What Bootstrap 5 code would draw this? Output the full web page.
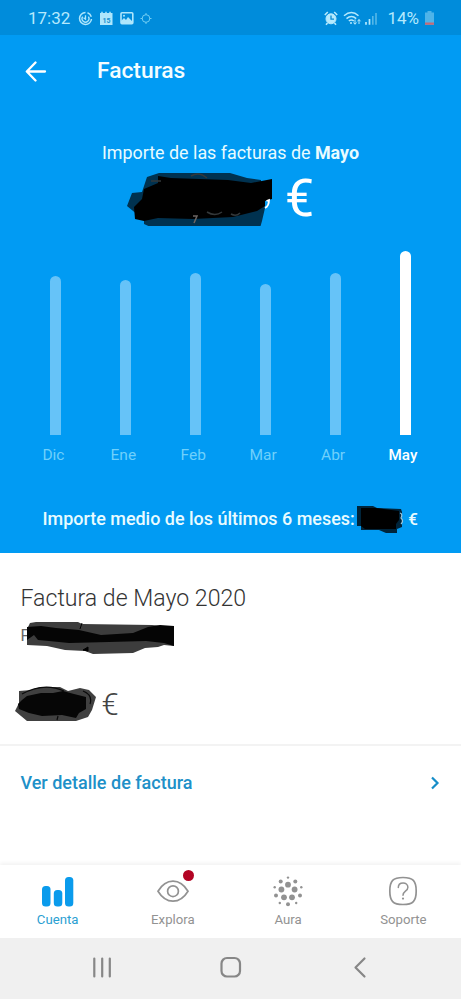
<!DOCTYPE html>
<html lang="es">
<head>
<meta charset="utf-8">
<meta name="viewport" content="width=device-width, initial-scale=1">
<title>Facturas</title>
<link href="https://cdn.jsdelivr.net/npm/bootstrap@5.3.0/dist/css/bootstrap.min.css" rel="stylesheet">
<style>
body{font-family:Roboto,"Liberation Sans",sans-serif;color:#444;background:#fff;height:999px;overflow:hidden}
svg{display:block;flex:none}
.status{height:35px;background:#008cdb;color:#b5e9fd;font-size:17px;line-height:35px;padding:1px 27px 0 28px}
.clock-icons{margin-left:8px}
.battery-text{margin-left:10px}
.battery-icon{margin-left:6px}
.hero{height:518px;background:#019bf3;color:#e9fbff}
.topbar{height:72px;padding-left:25px}
.topbar h1{font-size:22.8px;font-weight:500;margin:0 0 0 50px;color:#f4fdff}
.caption-line{height:24px;line-height:24px;margin-top:34px;font-size:17.9px}
.total{height:54px;margin-top:7px;padding-left:127px}
.total .euro{font-size:52px;line-height:54px;margin-left:12px;color:#fff}
.chart{height:185px;margin-top:24px;padding:0 20.5px 0 20.5px}
.bar-item{width:10.5px;border-radius:5.5px 5.5px 0 0;background:#66c3f8}
.bar-item.current{background:#fff}
.months{padding:0 23px 0 18.5px;margin-top:10px;font-size:15.5px;line-height:21px;color:#6fd0fb}
.months .current{color:#fff;font-weight:500;font-size:15.2px}
.average{margin-top:38px;padding-left:42.5px;height:30px;font-size:17.95px;line-height:30px;font-weight:500}
.average svg{margin-left:2.5px}
.average .unit{margin-left:4px;font-size:17px}
.bill{height:193px;padding:30px 20px 0 20.5px;border-bottom:2px solid #f3f3f3}
.bill h2{font-size:23.1px;line-height:32px;font-weight:300;margin:0;color:#333}
.ident{height:32px;margin-top:7px;font-size:16px;line-height:28px;font-weight:400;color:#666}
.ident svg{margin-left:-2px}
.amount{height:38px;margin:31px 0 0 -7px}
.amount span{font-size:31px;line-height:39px;font-weight:300;margin-left:4px}
.detail{height:73px;padding:0 20px 0 20.5px;color:#2090c8;font-size:18px;font-weight:500}
.tabs{height:73px;margin-top:46px;box-shadow:0 -2px 4px rgba(0,0,0,.055);font-size:13.2px;color:#929292}
.tabs .tab-item{padding-top:11px}
.tabs .label{line-height:18px;margin-top:3px}
.tabs .active{color:#2aa0d2}
.dot{position:absolute;width:11px;height:11px;border-radius:50%;background:#b30424;left:68px;top:5px}
.sysnav{height:61px;background:#f0f0f0}
</style>
<script src="https://cdn.jsdelivr.net/npm/bootstrap@5.3.0/dist/js/bootstrap.bundle.min.js"></script>
</head>
<body>
<div class="status d-flex align-items-center">
  <span>17:32</span>
  <svg class="clock-icons" width="76" height="15" viewBox="0 0 76 15" fill="none" stroke="#aee6fc">
    <path d="M7.500 1.500A6 6 0 1 0 13.500 8M9.500 1.700a6 6 0 0 1 3.800 4" stroke-width="1.500"/><path d="M4.600 5.600a3.500 3.500 0 1 0 5.800 0M7.500 4.200v4L5.600 6.800" stroke-width="1.300"/>
    <path d="M22 2h12.500v12H22z" fill="#aee6fc" stroke="none"/><path d="M24 .8v3m4-3v3m4-3v3" stroke-width="1.500"/>
    <text x="24.500" y="11.500" font-family="Roboto" font-size="7" font-weight="700" fill="#168fce" stroke="none">15</text>
    <rect x="43" y="1.800" width="11.800" height="11" rx="1" stroke-width="1.600"/><path d="M43 12V10l3-3 2 2 2-3 5 5v2z" fill="#aee6fc" stroke="none"/><circle cx="46" cy="4.700" r="1" fill="#aee6fc" stroke="none"/>
    <circle cx="68" cy="7.500" r="3.800" stroke="#71cdf2"/><path d="M68 2v2m0 7v2M62.500 7.500h2m7 0h2" stroke="#71cdf2"/>
  </svg>
  <svg class="ms-auto" width="54" height="15" viewBox="0 0 54 15" fill="none" stroke="#b5e9fd">
    <circle cx="8" cy="7.800" r="5" fill="#b5e9fd"/><path d="M8 4.500v3.700h3" stroke="#078cd4" stroke-width="1.300"/><path d="M1.800 4 4.800 1M14.200 4l-3-3M4.500 12 3 13.800M11.500 12l1.500 1.800" stroke-width="1.600"/>
    <path d="M21 4.800q7.500-6.500 14.500 0M23.500 7.600q5-4.200 9.700 0M25.800 10q2.700-2 5 0" stroke-width="1.500"/><circle cx="28" cy="12" r="1" fill="#b5e9fd" stroke="none"/>
    <path d="M32 8.500v4.500m-1.500-1.500 1.500 1.800 1.500-1.800M36 13V8.500m-1.500 1.800 1.500-1.800 1.500 1.800" stroke-width="1"/>
    <path d="M43 11v2.700M46.500 8v5.700" stroke-width="1.700"/><path d="M49.800 5v8.700M53 2v11.700" stroke="#55b8e8" stroke-width="1.600"/>
  </svg>
  <span class="battery-text">14%</span>
  <svg class="battery-icon" width="9" height="14" viewBox="0 0 9 14"><path d="M2.500 0h4v1.500H9V14H0V1.500h2.500z" fill="#4fb4e9"/><path d="M0 11.500h9v2.300H0z" fill="#c36a78"/></svg>
</div>

<main class="hero">
  <header class="topbar d-flex align-items-center">
    <svg width="22" height="22" viewBox="0 0 22 22" fill="none" stroke="#fff" stroke-width="2.300" stroke-linecap="round" stroke-linejoin="round"><path d="M20 11.500H2M10.500 2.500 1.800 11.500l8.700 9"/></svg>
    <h1>Facturas</h1>
  </header>
  <div class="caption-line text-center">Importe de las facturas de <strong>Mayo</strong></div>
  <div class="total d-flex">
    <svg width="146" height="54" viewBox="0 0 146 54">
      <path d="M0 34 5 21l10-1 5-15 12-4h71l17 5 14 2v14l4 14-3 13-2 7h-10l-25-2-29 3H28l-11-5v-4z" fill="#003250"/>
      <path d="M17 17 31 11V4l13 2 57 2 23 3 21-4v20l-7 2v5l-8 5-24 6-40 2-35-1-14 3-9-2-1-12 8-8z" fill="#000"/>
      <path d="M64 4q8-5 16 2M80 40q8 5 15 0M104 42q5 3 9-1M24 9h10" fill="none" stroke="#33383a" stroke-width="1.500"/>
      <path d="M66 44h4l-3 7" fill="none" stroke="#6c6663" stroke-width="1.500"/>
      <path d="M139.500 29l2.500-1q0 6-4 8" fill="none" stroke="#fff" stroke-width="1.800"/>
    </svg>
    <span class="euro">€</span>
  </div>
  <div class="chart row g-0 row-cols-6 align-items-end">
    <div class="col d-flex justify-content-center"><div class="bar-item" style="height:159px"></div></div>
    <div class="col d-flex justify-content-center"><div class="bar-item" style="height:155px"></div></div>
    <div class="col d-flex justify-content-center"><div class="bar-item" style="height:162px"></div></div>
    <div class="col d-flex justify-content-center"><div class="bar-item" style="height:151px"></div></div>
    <div class="col d-flex justify-content-center"><div class="bar-item" style="height:162px"></div></div>
    <div class="col d-flex justify-content-center"><div class="bar-item current" style="height:184.500px"></div></div>
  </div>
  <div class="months row g-0 row-cols-6 text-center">
    <div class="col">Dic</div><div class="col">Ene</div><div class="col">Feb</div><div class="col">Mar</div><div class="col">Abr</div><div class="col current">May</div>
  </div>
  <div class="average d-flex text-nowrap">
    <span>Importe medio de los últimos 6 meses:</span>
    <svg width="47" height="30" viewBox="0 0 47 30"><path d="M0 2h16l4 2 24 1 1 3v15l-5 2v4H29l-7-3H4v-4H0z" fill="#00243a"/><path d="M4 4h15l23 3v9l-3 4v5H8l-4-3z"/><path d="M43 9q3 1 1 5 3 3 0 6" fill="none" stroke="#9dc9dd" stroke-width="1.200"/></svg>
    <span class="unit">€</span>
  </div>
</main>

<section class="bill">
  <h2>Factura de Mayo 2020</h2>
  <div class="ident d-flex">
    <span>F</span>
    <svg width="147" height="32" viewBox="0 0 147 32">
      <path d="M0 7 3 1 9 0h42l4 2 70 1 22 2v19l-10-1-6 2-13 1-12 5-40 1-8-3-20-1-18-4-21-1z" fill="#3d3d3d"/>
      <path d="M0 5 14 4l15 2 23 2 22 5 32-2 15-6 12-2 14 1v20l-10-3-18-2-37 1-40 1-20-2-11-1-4-5-7 5z" fill="#050505"/><path d="M55 1l-2 6M61 25l-5 3 5 1z" stroke="#000" stroke-width="1"/>
    </svg>
  </div>
  <div class="amount d-flex">
    <svg width="84" height="38" viewBox="0 0 84 38">
      <path d="M5 6l12-1 9-3h20l8 4 12-3 9 2 7 7-4 13-4 7-12 4H13L1 26l4-8z" fill="#404040"/>
      <path d="M13 11 27 8h12l10-2 11 3 12 3v12l-7 4-3 5-14-3-20 1-13-3-10-4-1-5 4-4z" fill="#060606"/><path d="M8 9Q30-3 50 6M69 6q10 4 7 13M44 31l-1 4" fill="none" stroke="#0a0a0a" stroke-width="1.200"/>
    </svg>
    <span>€</span>
  </div>
</section>
<div class="detail d-flex align-items-center justify-content-between">
  <span>Ver detalle de factura</span>
  <svg width="12" height="15" viewBox="0 0 12 15" fill="none" stroke="#168dc8" stroke-width="2.200"><path d="m3 2.500 5.500 5.500L3 13.500"/></svg>
</div>

<nav class="tabs row g-0 row-cols-4 text-center">
  <div class="col tab-item active d-flex flex-column align-items-center">
    <svg width="32" height="32" viewBox="0 0 32 32" fill="#0a9bec"><rect x="0" y="10" width="8.500" height="20.500" rx="3.500"/><rect x="11.800" y="14" width="8.500" height="16.500" rx="3.500"/><rect x="23" y="1" width="8.300" height="29.500" rx="3.500"/></svg>
    <div class="label">Cuenta</div>
  </div>
  <div class="col tab-item position-relative d-flex flex-column align-items-center">
    <svg width="32" height="32" viewBox="0 0 32 32" fill="none" stroke="#929292" stroke-width="1.700"><path d="M1 15.300C9 1.800 23 1.800 31 15.300 23 28.500 9 28.500 1 15.300z"/><circle cx="16" cy="15.200" r="5.400"/></svg>
    <span class="dot"></span>
    <div class="label">Explora</div>
  </div>
  <div class="col tab-item d-flex flex-column align-items-center">
    <svg width="32" height="32" viewBox="0 0 32 32" fill="#929292"><circle cx="16" cy="8.700" r="2.900"/><circle cx="9.400" cy="13.500" r="2.900"/><circle cx="22.600" cy="13.500" r="2.900"/><circle cx="12" cy="21.300" r="2.900"/><circle cx="20" cy="21.300" r="2.900"/><circle cx="8.700" cy="5.400" r="2"/><circle cx="23.300" cy="5.400" r="2"/><circle cx="4" cy="19.500" r="2"/><circle cx="28" cy="19.500" r="2"/><circle cx="16" cy="28.200" r="2"/><circle cx="16" cy="1.600" r="1.200"/><circle cx="2.700" cy="11.300" r="1.200"/><circle cx="29.300" cy="11.300" r="1.200"/><circle cx="7.800" cy="27" r="1.200"/><circle cx="24.200" cy="27" r="1.200"/></svg>
    <div class="label">Aura</div>
  </div>
  <div class="col tab-item d-flex flex-column align-items-center">
    <svg width="32" height="32" viewBox="0 0 32 32" fill="none" stroke="#929292" stroke-width="1.700"><path d="M16 1.500c10 0 13.200 3.300 13.200 13.500S26 28.500 16 28.500 2.800 25.200 2.800 15 6 1.500 16 1.500z"/><path d="M11.300 11.500c0-6 9.600-6 9.600-.3 0 4-4.900 4-4.900 8" stroke-width="1.500" stroke-linecap="round"/><circle cx="16" cy="22.600" r="1.100" fill="#929292" stroke="none"/></svg>
    <div class="label">Soporte</div>
  </div>
</nav>
<footer class="sysnav d-flex align-items-center">
  <svg width="461" height="61" viewBox="0 0 461 61" fill="none" stroke="#878787" stroke-width="2.200" stroke-linecap="round"><path d="M94.300 20.500v18M102.200 20.500v18M109.800 20.500v18"/><rect x="221.500" y="20" width="18.500" height="18.500" rx="5.500"/><path d="m364.500 20.500-9 9 9 9" stroke-linejoin="round"/></svg>
</footer>
</body>
</html>
